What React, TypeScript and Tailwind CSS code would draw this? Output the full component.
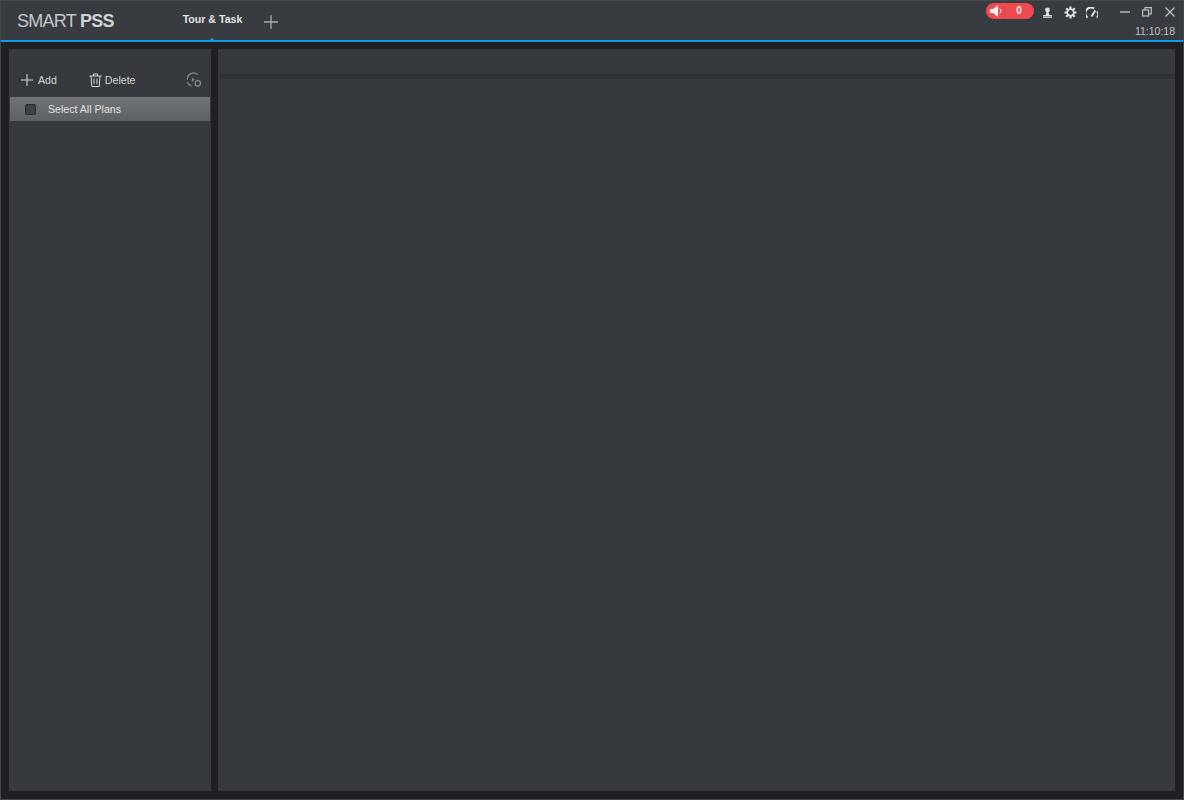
import React from "react";

const font = { fontFamily: '"Liberation Sans", Arial, sans-serif' };

export default function App() {
  return (
    <div className="w-[1184px] h-[800px] flex flex-col overflow-hidden bg-[#1e2024] border border-[#44474b]" style={font}>
      <header className="relative h-[39px] shrink-0 flex items-start bg-[#383b3f]">
        <div className="w-[180px] pl-[15px] pt-[10px] ml-px text-[18px] leading-[21px] tracking-[-0.72px] text-[#c4c6c8]">
          SMART <span className="font-bold text-[#d0d2d3]">PSS</span>
        </div>
        <div className="w-[61px] pt-[11px] text-center text-[10.6px] leading-[14px] font-bold text-[#e2e3e4]">Tour &amp; Task</div>
        <svg className="ml-[20px] mt-[13px]" width="16" height="16" viewBox="0 0 16 16" fill="none" stroke="#a9abad" strokeWidth="1.3">
          <path d="M8 1v14M1 8h14" />
        </svg>
        <div className="ml-auto flex flex-col items-end pr-[8px]">
          <div className="flex items-center h-[20px]">
            <div className="w-[48px] h-[16px] rounded-full bg-[#ef4a4f] flex items-center">
              <svg className="ml-[4px]" width="13" height="12" viewBox="0 0 13 12" fill="#f6f1f1">
                <path d="M0 4h3l5-4v12L3 8H0z" />
                <path d="M9.5 3.5a3 3 0 0 1 0 5" fill="none" stroke="#f6f1f1" strokeWidth="1" />
              </svg>
              <div className="w-px h-[11px] ml-[1px] bg-[#d83f44]" />
              <span className="ml-[9px] w-[10px] text-center text-[10px] font-bold leading-none text-[#f7eaea]">0</span>
            </div>
            <svg className="ml-[8px] mt-[2px]" width="11" height="11" viewBox="0 0 11 11" fill="#e2e3e4">
              <circle cx="5.5" cy="3" r="2.4" />
              <path d="M4.500 5h2l.6 2.700L10 8.200V9.500H1V8.200l2.900-.5z" />
              <path d="M1 10.200h9v.8H1z" />
            </svg>
            <svg className="ml-[11px] mt-[2px]" width="13" height="13" viewBox="0 0 24 24" fill="none" stroke="#e2e3e4" strokeWidth="3">
              <circle cx="12" cy="12" r="6" />
              <path strokeWidth="4" d="M12 1v5M12 18v5M1 12h5M18 12h5M4.200 4.200l3.600 3.600M16.200 16.200l3.600 3.600M4.200 19.800l3.600-3.600M16.200 7.800l3.600-3.600" />
            </svg>
            <svg className="ml-[9px] mt-[2px]" width="12" height="11" viewBox="0 0 12 11" fill="none" stroke="#e2e3e4" strokeWidth="2">
              <path d="M1.600 10.500A5 5 0 0 1 8 1.600" />
              <path d="M10.900 4.500A5 5 0 0 1 10.800 10.500" strokeWidth="1.400" />
              <path d="M5.500 9.500l3.800-6" strokeWidth="1.900" />
            </svg>
            <svg className="ml-[22px] mt-[2px]" width="10" height="10" viewBox="0 0 10 10" stroke="#bfc1c3" strokeWidth="1.4">
              <path d="M0 5h10" />
            </svg>
            <svg className="ml-[12px] mt-[2px]" width="10" height="10" viewBox="0 0 10 10" fill="none" stroke="#bfc1c3" strokeWidth="1.2">
              <rect x="0.6" y="3" width="6" height="6" />
              <path d="M3 3V.7h6.300V7H6.600" />
            </svg>
            <svg className="ml-[13px] mt-[2px]" width="10" height="10" viewBox="0 0 10 10" stroke="#bfc1c3" strokeWidth="1.3">
              <path d="M.5.5l9 9M9.500.5l-9 9" />
            </svg>
          </div>
          <div className="mt-[3px] text-[10.5px] leading-[14px] text-[#bfc1c3]">11:10:18</div>
        </div>
      </header>
      <div className="relative h-[2px] shrink-0 bg-[#0f9be8]">
        <div className="absolute left-[209px] top-[-2px] w-0 h-0 border-x-[2px] border-x-transparent border-b-[2px] border-b-[#0f9be8]" />
      </div>
      <main className="flex-1 min-h-0 flex gap-[7px] px-[8px] pt-[7px] pb-[8px]">
        <aside className="w-[202px] shrink-0 bg-[#36393d]">
          <div className="h-[48px] pt-[14px] flex items-center text-[10.6px] text-[#d4d5d6]">
            <svg className="ml-[12px]" width="12" height="12" viewBox="0 0 12 12" stroke="#d4d5d6" strokeWidth="1.1">
              <path d="M6 0v12M0 6h12" />
            </svg>
            <span className="ml-[5px] pt-[2px]">Add</span>
            <svg className="ml-[32px]" width="13" height="14" viewBox="0 0 13 14" fill="none" stroke="#d4d5d6" strokeWidth="1">
              <path d="M.5 3h12M4.500 3V1h4v2M2 3l.8 10.500h7.400L11 3M5 5.500v5.500M8 5.500v5.500" />
            </svg>
            <span className="ml-[3px] pt-[2px]">Delete</span>
            <svg className="ml-[51px]" width="16" height="16" viewBox="0 0 16 16" fill="none" stroke="#85878a" strokeWidth="1.3">
              <path d="M1.500 7.500A6 6 0 0 1 11.500 2.500M1.500 10a6 6 0 0 0 4 4" />
              <path d="M5.800 5.500v4.500l3-2.200z" fill="#85878a" stroke="none" />
              <circle cx="11.800" cy="11.300" r="2.700" />
            </svg>
          </div>
          <div className="mx-px h-[24px] flex items-center bg-gradient-to-b from-[#717477] to-[#5d6064]">
            <div className="ml-[15px] w-[11px] h-[11px] rounded-[2px] bg-[#3c4147] border border-[#2a2c30]" />
            <span className="ml-[12px] pt-[2px] text-[10.6px] text-[#e0e1e2]">Select All Plans</span>
          </div>
        </aside>
        <section className="flex-1 min-w-0 bg-[#36393d]">
          <div className="mt-[25px] ml-px h-[5px] bg-[#2f3236]" />
        </section>
      </main>
    </div>
  );
}
